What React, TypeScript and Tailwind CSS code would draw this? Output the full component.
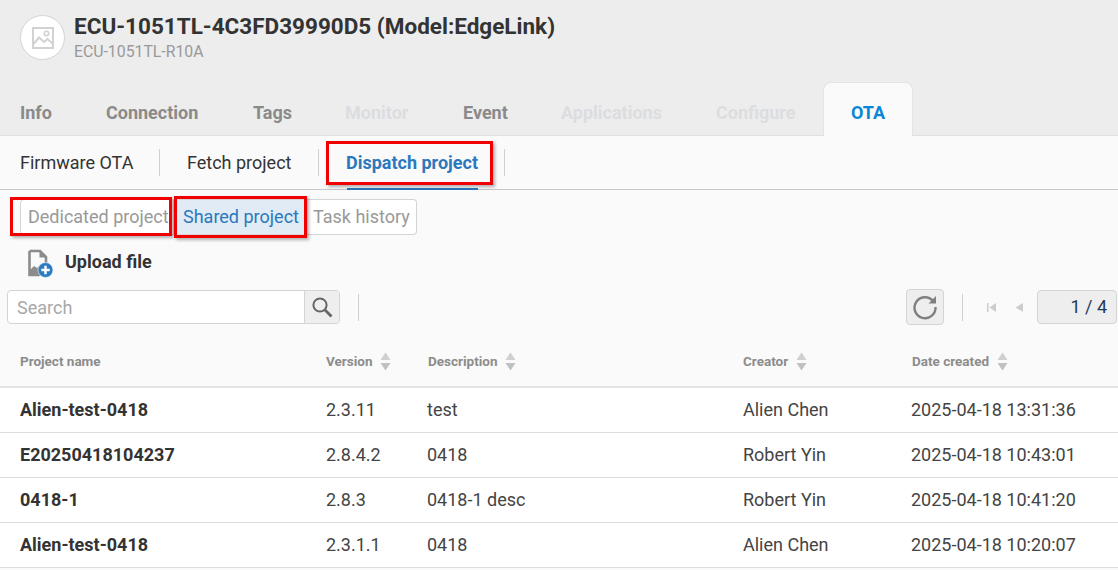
const mainTabs = [
  { label: 'Info', w: 'w-[86px]', color: 'text-[#8a8a8a]' },
  { label: 'Connection', w: 'w-[147px]', color: 'text-[#8a8a8a]' },
  { label: 'Tags', w: 'w-[92px]', color: 'text-[#8a8a8a]' },
  { label: 'Monitor', w: 'w-[118px]', color: 'text-[#dcdde0]' },
  { label: 'Event', w: 'w-[98px]', color: 'text-[#8a8a8a]' },
  { label: 'Applications', w: 'w-[155px]', color: 'text-[#dcdde0]' },
  { label: 'Configure', w: 'w-[107px]', color: 'text-[#dcdde0]' },
];

const rows = [
  ['Alien-test-0418', '2.3.11', 'test', 'Alien Chen', '2025-04-18 13:31:36'],
  ['E20250418104237', '2.8.4.2', '0418', 'Robert Yin', '2025-04-18 10:43:01'],
  ['0418-1', '2.8.3', '0418-1 desc', 'Robert Yin', '2025-04-18 10:41:20'],
  ['Alien-test-0418', '2.3.1.1', '0418', 'Alien Chen', '2025-04-18 10:20:07'],
];

function SortArrows() {
  return (
    <svg width="11" height="19" viewBox="0 0 11 19" className="ml-[8px]">
      <path d="M5.5 0.5 L10.5 8 H0.5 Z" fill="#d0d0d0" />
      <path d="M0.5 11 H10.5 L5.5 18.5 Z" fill="#c0c0c0" />
    </svg>
  );
}

function RedBox({ className }: { className: string }) {
  return <div className={`absolute border-[3px] border-[#f00000] shadow-[2px_2px_3px_rgba(0,0,0,0.3)] pointer-events-none ${className}`}></div>;
}

export default function App() {
  return (
    <div className="relative w-[1118px] h-[570px] overflow-hidden bg-[#fafafa] text-[#333333]" style={{ fontFamily: 'Roboto, sans-serif' }}>
      <div className="h-[136px] bg-[#ededed] border-b border-[#e0e0e0] flex flex-col">
        <div className="flex pl-[20px] pt-[15px] h-[82px]">
          <div className="w-[45px] h-[45px] rounded-full bg-white border border-[#d4d4d4] flex items-center justify-center">
            <svg width="22" height="22" viewBox="0 0 22 22" fill="none">
              <rect x="1" y="1" width="20" height="20" stroke="#d2d2d2" strokeWidth="2" />
              <circle cx="14.5" cy="6.5" r="2.2" stroke="#d2d2d2" strokeWidth="1.6" />
              <path d="M1.5 17 L7 10.5 L12 15 L15.5 12 L20.5 16.5" stroke="#d2d2d2" strokeWidth="2" />
            </svg>
          </div>
          <div className="ml-[9px] -mt-[1px]">
            <div className="text-[22.5px] leading-[24px] font-bold text-[#333333] whitespace-nowrap">ECU-1051TL-4C3FD39990D5 (Model:EdgeLink)</div>
            <div className="text-[15.8px] leading-[20px] mt-[4px] text-[#999999]">ECU-1051TL-R10A</div>
          </div>
        </div>
        <div className="flex flex-1 pl-[20px] relative">
          {mainTabs.map((t) => (
            <div key={t.label} className={`${t.w} shrink-0 pt-[20px] text-[18px] leading-[22px] font-bold whitespace-nowrap ${t.color}`}>{t.label}</div>
          ))}
          <div className="w-[90px] h-[54px] mb-[-1px] pt-[5px] bg-[#fafafa] border border-b-0 border-[#e4e4e4] rounded-t-[8px] flex items-center justify-center text-[18px] font-bold text-[#0a86d8]">OTA</div>
        </div>
      </div>

      <div className="h-[54px] border-b border-[#c8c8c8] flex items-center pl-[20px] text-[18px]">
        <div className="w-[139px] text-[#333333]">Firmware OTA</div>
        <div className="w-px h-[27px] bg-[#d0d0d0]"></div>
        <div className="w-[158px] pl-[27px] text-[#333333]">Fetch project</div>
        <div className="w-px h-[27px] bg-[#d0d0d0]"></div>
        <div className="relative w-[185px] h-full flex items-center pl-[27px] font-bold text-[#2c78bd]">
          Dispatch project
          <div className="absolute left-[28px] bottom-[-1px] w-[131px] h-[2px] bg-[#2c78bd]"></div>
        </div>
        <div className="w-px h-[27px] bg-[#d0d0d0]"></div>
      </div>

      <div className="flex pl-[20px] pt-[9px] h-[35px] box-content text-[18px] leading-[33px]">
        <div className="h-[36px] w-[154px] pl-[7px] bg-white border border-[#d4d4d4] rounded-l-[4px] text-[#999999] whitespace-nowrap">Dedicated project</div>
        <div className="h-[36px] w-[134px] pl-[9px] bg-[#e0ebf6] text-[#2c78bd] whitespace-nowrap border-y border-[#d4d4d4]">Shared project</div>
        <div className="h-[36px] w-[109px] pl-[5px] bg-white border border-l-0 border-[#d4d4d4] rounded-r-[4px] text-[#999999] whitespace-nowrap">Task history</div>
      </div>

      <div className="flex items-center h-[56px] pl-[28px]">
        <svg width="26" height="30" viewBox="0 0 26 30" className="mt-[3px] shrink-0">
          <path d="M1.5 2 H12 L18 8 V16 M1.5 2 V26 H11" fill="#fafafa" stroke="#8c8c8c" strokeWidth="2.6" />
          <path d="M11.5 1 V8.5 H19 Z" fill="#8c8c8c" />
          <path d="M2 26 V21 L6 17 L9 19 L13 15 L16 17 L12 27 H2 Z" fill="#8c8c8c" />
          <circle cx="17.5" cy="21" r="7.5" fill="#2c7cc4" stroke="#fafafa" strokeWidth="0.6" />
          <path d="M17.5 16.8 V25.2 M13.3 21 H21.7" stroke="#fff" strokeWidth="2.4" />
        </svg>
        <div className="ml-[11px] -mt-[2px] text-[18px] font-bold text-[#333333]">Upload file</div>
      </div>

      <div className="flex items-center h-[36px] pl-[7px] -mt-[1px]">
        <div className="flex w-[333px] h-[34px] bg-white border border-[#d4d4d4] rounded-[4px] overflow-hidden">
          <div className="flex-1 pl-[9px] text-[18px] leading-[34px] text-[#a8a8a8]">Search</div>
          <div className="w-[35px] bg-[#eeeeee] border-l border-[#d4d4d4] flex items-center justify-center">
            <svg width="21" height="21" viewBox="0 0 21 21" fill="none">
              <circle cx="8" cy="8" r="6.6" stroke="#666666" strokeWidth="2" />
              <path d="M12.8 12.8 L19.5 19.5" stroke="#666666" strokeWidth="2.8" />
            </svg>
          </div>
        </div>
        <div className="w-px h-[27px] bg-[#d0d0d0] ml-[18px]"></div>
        <div className="ml-[547px] w-[38px] h-[36px] bg-[#eeeeee] border border-[#d4d4d4] rounded-[4px] flex items-center justify-center">
          <svg width="26" height="26" viewBox="0 0 26 26" fill="none">
            <path d="M21.5 7.5 A10.5 10.5 0 1 0 23.5 13" stroke="#808080" strokeWidth="2.4" />
            <path d="M24 2 V9.5 H16.5 Z" fill="#808080" />
          </svg>
        </div>
        <div className="w-px h-[27px] bg-[#d0d0d0] ml-[18px]"></div>
        <svg width="9" height="9" viewBox="0 0 9 9" className="ml-[24px]">
          <path d="M0 0 H1.5 V9 H0 Z M9 0 V9 L2.5 4.5 Z" fill="#cccccc" />
        </svg>
        <svg width="8" height="9" viewBox="0 0 8 9" className="ml-[19px]">
          <path d="M8 0 V9 L0.5 4.5 Z" fill="#cccccc" />
        </svg>
        <div className="ml-[14px] w-[80px] h-[34px] bg-[#eeeeee] border border-[#d4d4d4] rounded-[4px] text-right pr-[9px] text-[18px] leading-[32px] text-[#1f3a5a]">1 / 4</div>
      </div>

      <div className="mt-[10px]">
        <div className="grid grid-cols-[306px_101px_316px_168px_1fr] pl-[20px] pt-[2px] h-[53px] items-center border-b-2 border-[#e4e4e4] text-[13.5px] font-bold text-[#8c8c8c]">
          <div>Project name</div>
          <div className="flex items-center">Version<SortArrows /></div>
          <div className="flex items-center ml-px">Description<SortArrows /></div>
          <div className="flex items-center">Creator<SortArrows /></div>
          <div className="flex items-center ml-px">Date created<SortArrows /></div>
        </div>
        {rows.map((r, i) => (
          <div key={i} className="grid grid-cols-[306px_101px_316px_168px_1fr] pl-[20px] pb-[2px] h-[45px] items-center bg-white border-b border-[#dedede] text-[18px] text-[#444444]">
            <div className="font-bold text-[#333333]">{r[0]}</div>
            <div>{r[1]}</div>
            <div>{r[2]}</div>
            <div>{r[3]}</div>
            <div>{r[4]}</div>
          </div>
        ))}
      </div>

      <RedBox className="left-[326px] top-[141px] w-[167px] h-[44px]" />
      <RedBox className="left-[10px] top-[197px] w-[162px] h-[39px]" />
      <RedBox className="left-[174px] top-[196px] w-[133px] h-[42px]" />
    </div>
  );
}
